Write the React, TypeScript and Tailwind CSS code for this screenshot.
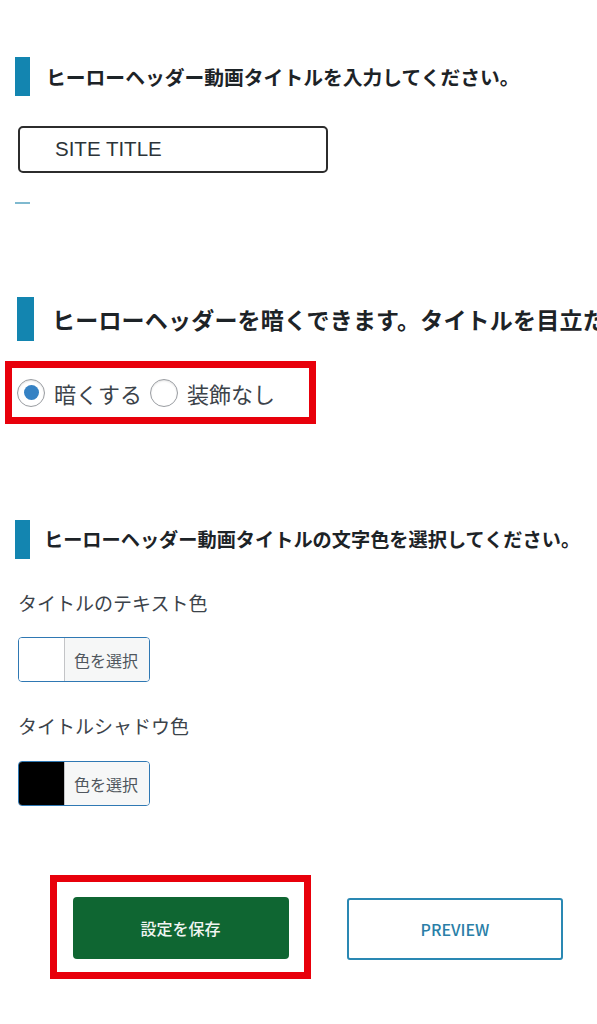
import React from "react";

const jp = { fontFamily: '"Noto Sans CJK JP", "Noto Sans", sans-serif' };

const SectionHeading = ({ text, size }: { text: string; size: "sm" | "md" | "lg" }) => (
  <div className="flex items-center">
    <div
      className={
        size === "lg"
          ? "w-[17px] h-[44px] bg-[#1385b0] ml-[17px] shrink-0"
          : "w-[15px] h-[39px] bg-[#1385b0] ml-[15px] shrink-0"
      }
    />
    <h2
      className={
        size === "lg"
          ? "ml-[18px] text-[23px] font-bold text-[#1d2327] whitespace-nowrap tracking-[0.2px]"
          : size === "md"
            ? "ml-[16px] text-[19.8px] font-bold text-[#1d2327] whitespace-nowrap"
            : "ml-[14px] text-[19.2px] font-bold text-[#1d2327] whitespace-nowrap"
      }
    >
      {text}
    </h2>
  </div>
);

const ColorPicker = ({ swatch }: { swatch: string }) => (
  <div className="ml-[18px] flex w-[132px] h-[45px] rounded-[4px] border-[1.5px] border-[#2f78b3] overflow-hidden">
    <div className={`w-[46px] h-full ${swatch} border-r border-[#c3c4c7]`} />
    <div className="flex-1 bg-[#f6f7f7] flex items-center pl-[9px] text-[16px] text-[#50575e]">
      色を選択
    </div>
  </div>
);

const Radio = ({ checked, label }: { checked?: boolean; label: string }) => (
  <label className="flex items-center">
    <span className="w-[28px] h-[28px] rounded-full border-[1.5px] border-[#9a9da2] bg-white flex items-center justify-center shrink-0 shadow-[inset_0_1px_2px_rgba(0,0,0,0.12)]">
      {checked && <span className="w-[15px] h-[15px] rounded-full bg-[#3582c4]" />}
    </span>
    <span className="ml-[9px] text-[22px] text-[#3c434a] leading-none">{label}</span>
  </label>
);

export default function App() {
  return (
    <div className="w-[597px] h-[1024px] bg-white overflow-hidden" style={jp}>
      <div className="pt-[57px]">
        <SectionHeading size="md" text="ヒーローヘッダー動画タイトルを入力してください。" />
      </div>

      <div
        className="mt-[30px] ml-[18px] w-[310px] h-[47px] rounded-[5px] border-2 border-[#2c2c2c] flex items-center pl-[35px] text-[20.5px] text-[#2c3338]"
        style={{ fontFamily: '"Liberation Sans", Arial, sans-serif' }}
      >
        SITE TITLE
      </div>

      <div className="mt-[29px] ml-[15px] w-[15px] h-[2px] bg-[#7fb9cf]" />

      <div className="mt-[93px] overflow-hidden">
        <SectionHeading size="lg" text="ヒーローヘッダーを暗くできます。タイトルを目立た" />
      </div>

      <div className="mt-[20px] ml-[5px] w-[311px] h-[63px] border-[7px] border-[#e8000b] flex items-center pl-[5px] gap-[8px]">
        <Radio checked label="暗くする" />
        <Radio label="装飾なし" />
      </div>

      <div className="mt-[96px]">
        <SectionHeading size="sm" text="ヒーローヘッダー動画タイトルの文字色を選択してください。" />
      </div>

      <p className="mt-[31px] ml-[18px] text-[19px] leading-[26px] text-[#3c434a]">
        タイトルのテキスト色
      </p>
      <div className="mt-[21px]">
        <ColorPicker swatch="bg-white" />
      </div>

      <p className="mt-[31px] ml-[18px] text-[19px] leading-[26px] text-[#3c434a]">
        タイトルシャドウ色
      </p>
      <div className="mt-[22px]">
        <ColorPicker swatch="bg-black" />
      </div>

      <div className="mt-[69px] flex items-center">
        <div className="ml-[50px] w-[261px] h-[104px] border-[7px] border-[#e8000b] flex items-center justify-center pt-[2px]">
          <button className="w-[216px] h-[62px] rounded-[4px] bg-[#0f6632] text-[#f1f5f2] text-[16px] font-medium">
            設定を保存
          </button>
        </div>
        <button className="ml-[36px] w-[216px] h-[62px] rounded-[3px] border-2 border-[#2a88b3] bg-white text-[#2a7fa8] text-[16px] font-medium mt-[4px]">
          PREVIEW
        </button>
      </div>
    </div>
  );
}
